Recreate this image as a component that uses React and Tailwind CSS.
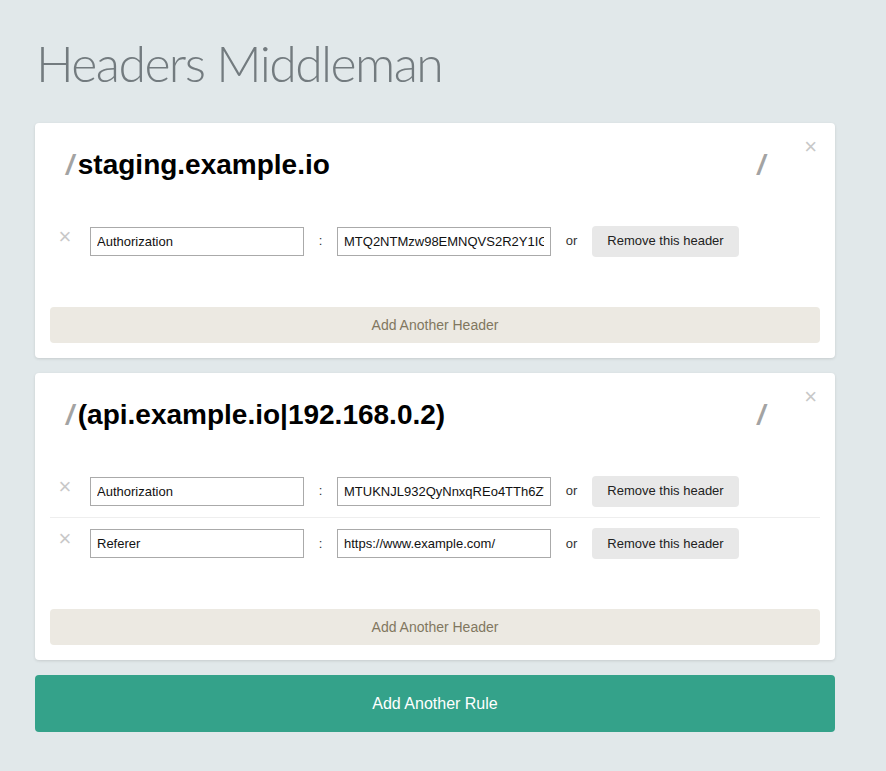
import React from 'react'

const rules = [
  {
    pattern: 'staging.example.io',
    headers: [
      { name: 'Authorization', value: 'MTQ2NTMzw98EMNQVS2R2Y1IGNhZGRy' },
    ],
  },
  {
    pattern: '(api.example.io|192.168.0.2)',
    headers: [
      { name: 'Authorization', value: 'MTUKNJL932QyNnxqREo4TTh6ZWxsbw' },
      { name: 'Referer', value: 'https://www.example.com/' },
    ],
  },
]

function HeaderRow({ header, first }) {
  return (
    <div className={`flex items-center h-[52px] ${first ? '' : 'border-t border-[#eeeeee]'}`}>
      <span className="w-[30px] text-center text-[22px] leading-none text-[#c8c8c8] -mt-[9px]">×</span>
      <input
        readOnly
        defaultValue={header.name}
        className="ml-[10px] w-[214px] h-[29px] border border-[#aaaaaa] px-[6px] text-[13px] text-[#111] outline-none bg-white"
      />
      <span className="w-[33px] text-center text-[13px] text-[#333]">:</span>
      <input
        readOnly
        defaultValue={header.value}
        className="w-[214px] h-[29px] border border-[#aaaaaa] px-[6px] text-[13px] text-[#111] outline-none bg-white"
      />
      <span className="w-[41px] text-center text-[13px] text-[#333]">or</span>
      <button className="w-[147px] h-[31px] rounded-[4px] bg-[#e8e8e8] text-[13px] text-[#222]">
        Remove this header
      </button>
    </div>
  )
}

function RuleCard({ rule }) {
  return (
    <div className="relative bg-white rounded-[4px] shadow-[0_1px_3px_rgba(0,0,0,0.12)] p-[15px]">
      <button className="absolute right-[18px] top-[13px] text-[22px] leading-none text-[#c8c8c8]">×</button>
      <div className="flex items-center justify-between h-[30px] mt-[12px] pl-[16px] pr-[55px]">
        <h2 className="text-[28px] font-bold text-black leading-none">
          <span className="italic text-[#a3a3a3] mr-[4px]">/</span>
          {rule.pattern}
        </h2>
        <span className="italic text-[28px] font-bold text-[#a3a3a3] leading-none">/</span>
      </div>
      <div className="mt-[35px]">
        {rule.headers.map((h, i) => (
          <HeaderRow key={i} header={h} first={i === 0} />
        ))}
      </div>
      <button className="mt-[40px] w-full h-[36px] rounded-[4px] bg-[#ece9e2] text-[14px] text-[#81775f]">
        Add Another Header
      </button>
    </div>
  )
}

export default function App() {
  return (
    <div className="min-h-screen bg-[#e1e8ea] px-[35px] pb-[40px] font-['Liberation_Sans',Arial,sans-serif]">
      <h1 className="pt-[33px] h-[123px] text-[50px] leading-[60px] font-light tracking-[-1.6px] text-[#737b7f] font-['Lato','Open_Sans',sans-serif] pl-[1px]">
        Headers Middleman
      </h1>
      <div className="w-[800px] flex flex-col gap-[15px]">
        {rules.map((r, i) => (
          <RuleCard key={i} rule={r} />
        ))}
        <button className="h-[57px] w-full rounded-[4px] bg-[#34a28a] text-white text-[16px]">
          Add Another Rule
        </button>
      </div>
    </div>
  )
}
